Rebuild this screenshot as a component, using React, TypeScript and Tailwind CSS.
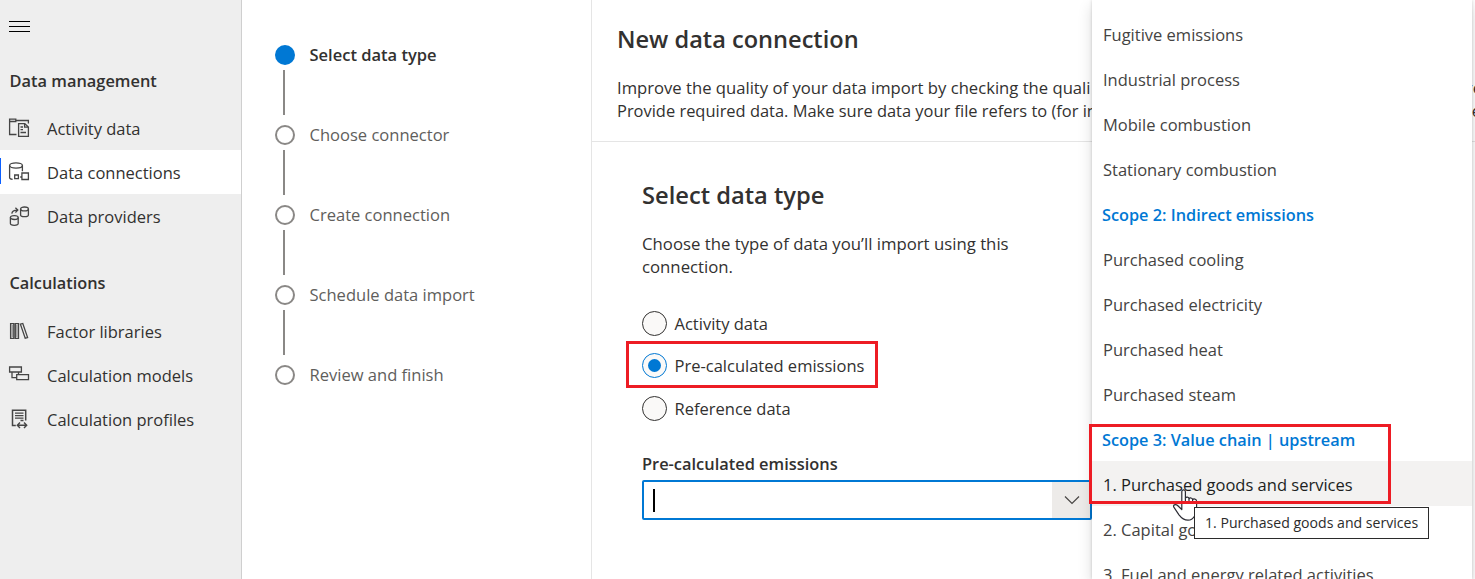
import React from "react";

type IconProps = { children: React.ReactNode };

function Icon({ children }: IconProps) {
  return (
    <svg
      width="22"
      height="22"
      viewBox="0 0 22 22"
      fill="none"
      stroke="#454545"
      strokeWidth="1.3"
      className="shrink-0"
    >
      {children}
    </svg>
  );
}

const ActivityIcon = () => (
  <Icon>
    <path d="M8.500 17.500H1.600V2.200h6.200v2.300H2M7.800 3.500h12.600v3" />
    <path d="M10.600 6.600h6.200l3.600 3.400v9.400h-9.800zM16.600 6.800V10.200h3.600" />
    <path d="M12.500 10h2.500M12.500 12.700h2.500M12.500 15.500h5.500" />
  </Icon>
);

const ConnectionsIcon = () => (
  <Icon>
    <ellipse cx="8" cy="4.5" rx="6.4" ry="2.6" />
    <path d="M1.600 4.500v12.200c0 .8 1 1.400 3 1.700M14.400 4.500v5.700" />
    <path d="M6.700 14h3.700v3.700H6.700zM12.200 16h1.200M13.900 12h6.500v6.500h-6.500z" />
  </Icon>
);

const ProvidersIcon = () => (
  <Icon>
    <ellipse cx="16.5" cy="3.9" rx="3.9" ry="1.9" />
    <path d="M12.600 3.900v6c0 1 1.700 1.800 3.900 1.800s3.900-.8 3.900-1.800v-6" />
    <ellipse cx="6.3" cy="12.6" rx="3.9" ry="1.9" />
    <path d="M2.400 12.600v6c0 1 1.700 1.800 3.900 1.800s3.900-.8 3.900-1.800v-6" />
    <path d="M3.800 8.600c.3-2.200 2-3.600 5.800-3.500M7.400 2.700l2.400 2.400-2.400 2.400" />
  </Icon>
);

const LibrariesIcon = () => (
  <Icon>
    <path d="M2.600 3.600h3.200v14.800H2.600zM7.300 3.600h3.200v14.800H7.300zM12.400 4.200l2.400-.7 4.800 14-2.400.8z" />
    <path d="M4.200 5v12M8.900 5v12" strokeWidth=".7" />
  </Icon>
);

const ModelsIcon = () => (
  <Icon>
    <path d="M1.600 3h11.800v5H1.600zM8.700 10.700h11.800v5H8.700zM4 8v5.700h4.700M10.500 8v2.700" />
  </Icon>
);

const ProfilesIcon = () => (
  <Icon>
    <path d="M7.800 17.600H4.500V2.200h13.200v10.300" strokeWidth="1.500" />
    <path d="M7 5.200h8.500M7 7.700h8.500M7 10.200h8.500M12.500 12.500h3" />
    <path d="M9.800 17.300h8.400M12 14.500l-2.700 2.800 2.700 2.800M16 14.500l2.700 2.800-2.700 2.800" strokeWidth="1.400" />
  </Icon>
);

function NavItem({ icon, label, active }: { icon: React.ReactNode; label: string; active?: boolean }) {
  return (
    <div className={active ? "relative flex h-11 items-center bg-white pl-2" : "flex h-11 items-center pl-2"}>
      {active && <span className="absolute left-0 top-2 h-[26px] w-px bg-[#0b5fff]" />}
      {icon}
      <span className="ml-[17px] pt-[2px] text-[16.5px]">{label}</span>
    </div>
  );
}

function Sidebar() {
  return (
    <nav className="flex w-[242px] shrink-0 flex-col border-r border-[#cfcfcf] bg-[#eeeeee] text-[#323130]">
      <div className="flex flex-col gap-1 pl-[9px] pt-[21px]">
        <span className="h-px w-[21px] bg-black" />
        <span className="h-px w-[21px] bg-black" />
        <span className="h-px w-[21px] bg-black" />
      </div>
      <div className="mt-[37px] h-6 pl-[9.5px] text-[16.4px] font-semibold leading-6">Data management</div>
      <div className="mt-[13px]">
        <NavItem icon={<ActivityIcon />} label="Activity data" />
        <NavItem icon={<ConnectionsIcon />} label="Data connections" active />
        <NavItem icon={<ProvidersIcon />} label="Data providers" />
      </div>
      <div className="mt-[33px] h-6 pl-[9.5px] text-[16.3px] font-semibold leading-6">Calculations</div>
      <div className="mt-[14px]">
        <NavItem icon={<LibrariesIcon />} label="Factor libraries" />
        <NavItem icon={<ModelsIcon />} label="Calculation models" />
        <NavItem icon={<ProfilesIcon />} label="Calculation profiles" />
      </div>
    </nav>
  );
}

const steps = ["Select data type", "Choose connector", "Create connection", "Schedule data import", "Review and finish"];

function Stepper() {
  return (
    <div className="flex w-[350px] shrink-0 flex-col border-r border-[#e5e5e5] pl-[33px] pt-[45px]">
      {steps.map((step, i) => (
        <div key={step} className="flex h-20 gap-[14.5px]">
          <div className="flex w-5 flex-col items-center">
            <span
              className={
                i === 0
                  ? "h-5 w-5 shrink-0 rounded-full bg-[#0078d4]"
                  : "h-5 w-5 shrink-0 rounded-full border-2 border-[#8a8886] bg-white"
              }
            />
            {i < steps.length - 1 && <span className="mr-[2px] mt-[5px] h-[45px] w-[2px] bg-[#8a8886]" />}
          </div>
          <span
            className={
              i === 0
                ? "text-[16.5px] font-semibold leading-5 text-[#323130]"
                : "text-[16.55px] leading-5 text-[#605e5c]"
            }
          >
            {step}
          </span>
        </div>
      ))}
    </div>
  );
}

function Radio({ label, checked }: { label: string; checked?: boolean }) {
  return (
    <div className="flex h-[25px] items-center gap-[7.5px]">
      <span
        className={
          checked
            ? "flex h-[25px] w-[25px] items-center justify-center rounded-full border border-[#0078d4] bg-[#faf9f8]"
            : "h-[25px] w-[25px] rounded-full border border-[#323130] bg-[#faf9f8]"
        }
      >
        {checked && <span className="h-[13px] w-[13px] rounded-full bg-[#0078d4]" />}
      </span>
      <span className="pt-px text-[16.5px] leading-6">{label}</span>
    </div>
  );
}

function Main() {
  return (
    <main className="min-w-0 flex-1 text-[#323130]">
      <header className="h-[142px] overflow-hidden whitespace-nowrap border-b border-[#e5e5e5] pl-[25px] pt-[23px]">
        <h1 className="text-[23.6px] font-semibold leading-8">New data connection</h1>
        <div className="mt-[21px] text-[16.65px] leading-[23px]">
          <div className="flex w-[865px] justify-between">
            <span>Improve the quality of your data import by checking the quali</span>
            <span>re</span>
          </div>
          <div className="flex w-[864px] justify-between text-[16.45px]">
            <span>Provide required data. Make sure data your file refers to (for in</span>
            <span>e</span>
          </div>
        </div>
      </header>
      <section className="pl-[50px] pt-[35px]">
        <h2 className="text-[23.7px] font-semibold leading-9">Select data type</h2>
        <p className="mt-[19px] w-[420px] text-[16.75px] leading-[23px]">
          Choose the type of data you’ll import using this
          <br />
          connection.
        </p>
        <div className="mt-[33px] flex flex-col">
          <Radio label="Activity data" />
          <div className="mt-[17px]">
            <Radio label="Pre-calculated emissions" checked />
          </div>
          <div className="mt-[18px]">
            <Radio label="Reference data" />
          </div>
        </div>
        <div className="mt-[31px] text-[16.4px] font-semibold leading-6">Pre-calculated emissions</div>
        <div className="mt-1 flex h-10 w-[450px] items-stretch justify-between rounded-[2px] border-2 border-[#0078d4] bg-white">
          <span className="ml-[9px] mt-[7px] h-[23px] w-[2px] bg-black" />
          <span className="flex w-[38px] items-center justify-center bg-[#edebe9] pl-[2px]">
            <svg width="16" height="10" viewBox="0 0 16 10" fill="none" stroke="#484644" strokeWidth="1.2">
              <path d="M1 1.500l7 7 7-7" />
            </svg>
          </span>
        </div>
      </section>
    </main>
  );
}

const options: { label: string; kind?: "group" | "hover" }[] = [
  { label: "Fugitive emissions" },
  { label: "Industrial process" },
  { label: "Mobile combustion" },
  { label: "Stationary combustion" },
  { label: "Scope 2: Indirect emissions", kind: "group" },
  { label: "Purchased cooling" },
  { label: "Purchased electricity" },
  { label: "Purchased heat" },
  { label: "Purchased steam" },
  { label: "Scope 3: Value chain | upstream", kind: "group" },
  { label: "1. Purchased goods and services", kind: "hover" },
  { label: "2. Capital goods" },
  { label: "3. Fuel and energy related activities" },
];

const optionClass = {
  normal: "flex h-[45px] shrink-0 items-center pl-[11px] pt-[3px] text-[16.5px] text-[#444342]",
  group: "flex h-[45px] shrink-0 items-center pl-[10px] pt-[3px] text-[16.3px] font-semibold text-[#0078d4]",
  hover: "flex h-[45px] shrink-0 items-center bg-[#f3f2f1] pl-[11px] pt-[3px] text-[16.5px] text-[#201f1e]",
};

function Menu() {
  return (
    <div className="absolute left-[1092px] top-0 flex h-[579px] w-[380px] flex-col overflow-hidden bg-white pt-[11px] shadow-[0_6px_14px_rgba(0,0,0,0.14),0_0_3px_rgba(0,0,0,0.18)]">
      {options.map((o) => (
        <div key={o.label} className={optionClass[o.kind ?? "normal"]}>
          {o.label}
        </div>
      ))}
    </div>
  );
}

function HandCursor() {
  return (
    <svg
      className="absolute left-[1172px] top-[489px]"
      width="28"
      height="32"
      viewBox="0 0 28 32"
      fill="#fff"
      stroke="#2b2b33"
      strokeWidth="1.2"
      strokeLinejoin="round"
    >
      <path d="M9.800 20.500V2.800c0-2.500 3.600-2.500 3.600 0v6.400c.8-1.600 3.400-1.300 3.600.6.800-1.400 3.500-1 3.600.9.900-1.200 4-1 4 1.600v6.500c0 6-2.800 12.300-8.600 12.300-4 0-6.500-2-9-5.300l-5-7.400c-1.600-2.300 1.500-3.700 3.300-2.200z" />
      <path d="M13.400 9.200v5M17 9.800v4.400M20.600 10.700v3.500" fill="none" />
    </svg>
  );
}

export default function App() {
  return (
    <div className="relative flex h-[579px] w-[1475px] overflow-hidden bg-white font-['Open_Sans','Noto_Sans',sans-serif]">
      <Sidebar />
      <Stepper />
      <Main />
      <div className="absolute left-[626px] top-[341px] h-[47px] w-[252px] border-3 border-[#ed1c24]" />
      <Menu />
      <HandCursor />
      <div className="absolute left-[1089px] top-[424px] h-[80px] w-[302px] border-3 border-[#ed1c24]" />
      <div className="absolute left-[1194px] top-[507px] flex h-[32px] w-[235px] items-center whitespace-nowrap border border-[#2b2b2b] bg-white pl-[10px] text-[14.1px] text-[#2b2b2b]">
        1. Purchased goods and services
      </div>
    </div>
  );
}
